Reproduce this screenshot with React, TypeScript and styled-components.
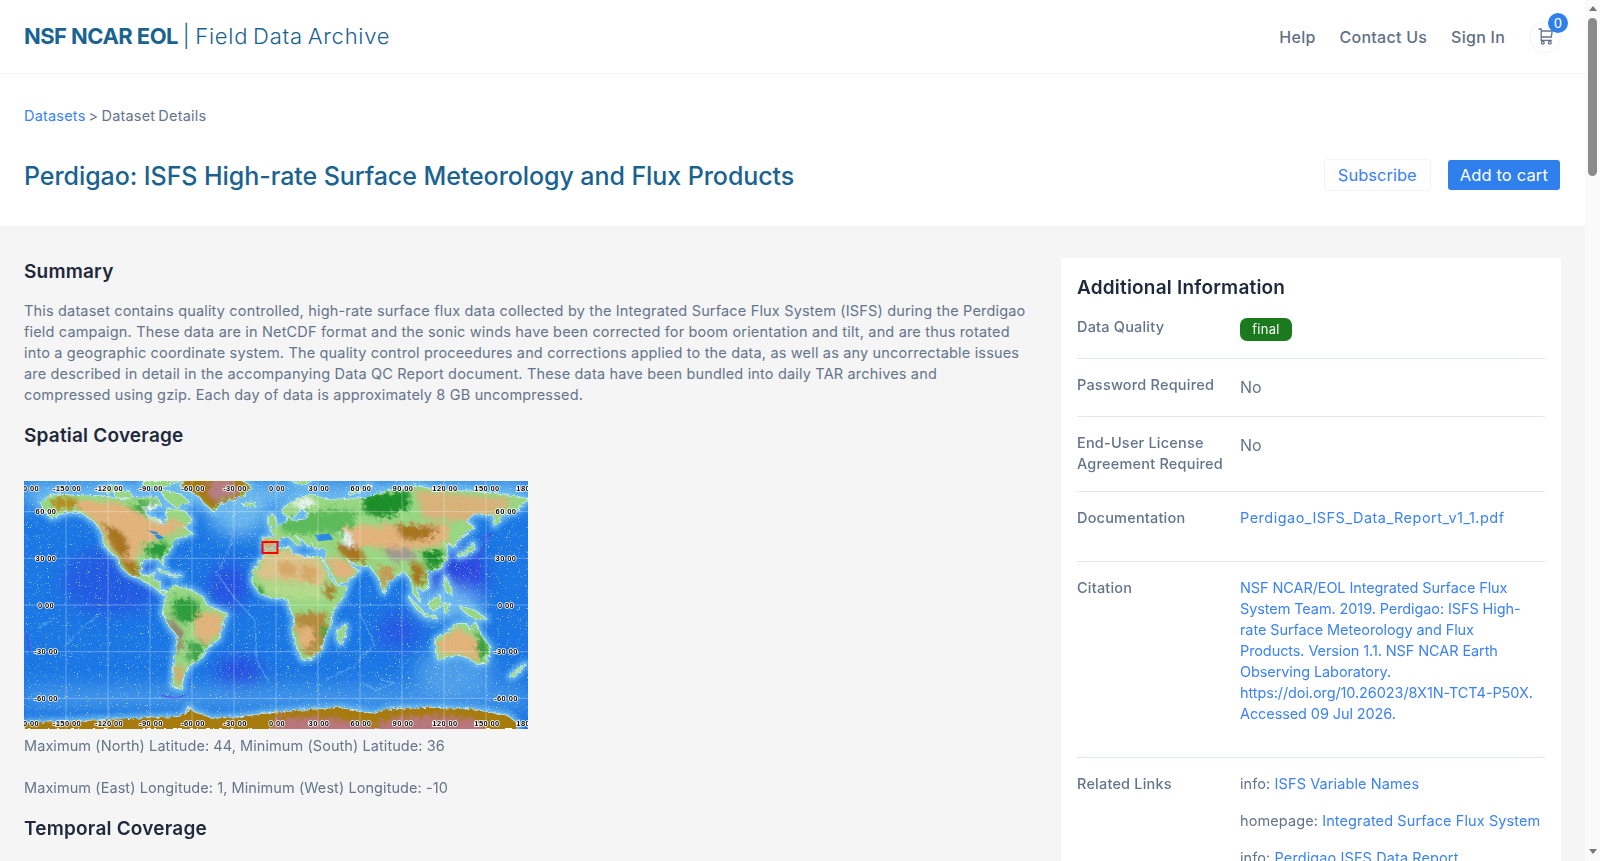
import React from 'react';
import styled, { createGlobalStyle } from 'styled-components';

const GlobalStyle = createGlobalStyle`
  body {
    margin: 0;
    background: #ffffff;
    font-family: Inter, 'Open Sans', sans-serif;
    color: #64748b;
  }
  a {
    color: #3b82f6;
    text-decoration: none;
  }
`;

const Shell = styled.div`
  height: 100vh;
  display: flex;
  overflow: hidden;
`;

const Scroller = styled.div`
  flex: 1;
  min-width: 0;
  overflow-y: auto;
  scrollbar-width: none;
`;

const ScrollTrack = styled.div`
  width: 15px;
  flex: none;
  background: #fafafa;
  display: flex;
  flex-direction: column;
  align-items: center;
`;

const ScrollArrow = styled.div<{ $down?: boolean }>`
  flex: none;
  width: 0;
  height: 0;
  margin: ${(p) => (p.$down ? 'auto 0 7px' : '6px 0 7px')};
  border-left: 4.5px solid transparent;
  border-right: 4.5px solid transparent;
  border-top: ${(p) => (p.$down ? '5px solid #777777' : 'none')};
  border-bottom: ${(p) => (p.$down ? 'none' : '5px solid #777777')};
`;

const ScrollThumb = styled.div`
  flex: none;
  width: 9px;
  height: 158px;
  border-radius: 5px;
  background: #8a8a8a;
`;

const Page = styled.div`
  min-height: 4507px;
  display: flex;
  flex-direction: column;
`;

const Header = styled.header`
  height: 73px;
  padding: 0 24px;
  display: flex;
  align-items: center;
  justify-content: space-between;
  border-bottom: 1px solid #f1f3f6;
`;

const Brand = styled.div`
  margin-top: -2px;
  font-size: 22px;
  font-weight: 300;
  color: #1a6390;
  letter-spacing: 0.78px;
  word-spacing: -2.2px;
  b {
    font-weight: 700;
    letter-spacing: -0.55px;
    word-spacing: 0;
  }
`;

const Nav = styled.nav`
  display: flex;
  align-items: center;
  gap: 24px;
`;

const NavLink = styled.a`
  font-size: 16px;
  font-weight: 500;
  letter-spacing: 0.25px;
  && {
    color: #5f6f87;
  }
`;

const CartButton = styled.button`
  position: relative;
  width: 32px;
  height: 32px;
  padding: 0;
  display: flex;
  align-items: center;
  justify-content: center;
  background: #ffffff;
  border: 1px solid #f1f5f9;
  border-radius: 50%;
  color: #64748b;
`;

const CartBadge = styled.span`
  position: absolute;
  top: -9px;
  right: -8px;
  width: 20px;
  height: 20px;
  border-radius: 50%;
  background: #2f80ed;
  color: #ffffff;
  font-size: 14px;
  line-height: 20px;
  text-align: center;
`;

const TitleSection = styled.section`
  padding: 31px 24px 32px;
`;

const Breadcrumb = styled.div`
  font-size: 14.5px;
  line-height: 21px;
  letter-spacing: 0.2px;
  word-spacing: -1.2px;
`;

const TitleRow = styled.div`
  margin-top: 32px;
  height: 36px;
  display: flex;
  align-items: center;
  justify-content: space-between;
`;

const PageTitle = styled.h1`
  margin: 0;
  font-size: 25px;
  font-weight: 500;
  letter-spacing: -0.07px;
  color: #1a6390;
`;

const Actions = styled.div`
  display: flex;
  align-items: center;
  gap: 17px;
  margin: 0 1px 2px 0;
`;

const ActionButton = styled.button<{ $primary?: boolean }>`
  height: ${(p) => (p.$primary ? '30px' : '32px')};
  padding: 0 ${(p) => (p.$primary ? '12px' : '13px')};
  font-family: inherit;
  font-size: 16.5px;
  letter-spacing: ${(p) => (p.$primary ? '0.15px' : '0')};
  border-radius: 3px;
  border: ${(p) => (p.$primary ? 'none' : '1px solid #f1f3f8')};
  background: ${(p) => (p.$primary ? '#2f80ed' : '#ffffff')};
  color: ${(p) => (p.$primary ? '#ffffff' : '#3b82f6')};
`;

const Main = styled.main`
  flex: 1;
  background: #f5f5f5;
  padding: 32px 24px;
  display: grid;
  grid-template-columns: 1fr 500px;
  gap: 32px;
  align-items: stretch;
`;

const Column = styled.div`
  min-width: 0;
`;

const SectionHeading = styled.h2`
  margin: 17px 0 15px;
  font-size: 19px;
  line-height: 27px;
  font-weight: 600;
  letter-spacing: 0.2px;
  color: #1e293b;
  &:first-child {
    margin-top: 0;
  }
`;

const BodyText = styled.p`
  margin: 0;
  font-size: 14.5px;
  line-height: 21px;
  letter-spacing: 0.17px;
`;

const MapFrame = styled.div`
  width: 504px;
  height: 248px;
  margin: 32px 0 6px;
`;

const Coordinate = styled.p`
  margin: 0 0 21px;
  font-size: 14.5px;
  line-height: 21px;
  letter-spacing: 0.07px;
  &:last-of-type {
    margin-bottom: 0;
  }
`;

const Card = styled.aside`
  background: #ffffff;
  padding: 16px;
`;

const CardHeading = styled.h2`
  margin: 0;
  font-size: 19px;
  line-height: 27px;
  font-weight: 600;
  letter-spacing: 0.2px;
  color: #1e293b;
`;

const Row = styled.div`
  display: grid;
  grid-template-columns: 163px 1fr;
  padding: 15px 0 17px;
  border-top: 1px solid #e2e8f0;
  &:first-of-type {
    border-top: none;
  }
`;

const Label = styled.div`
  font-size: 14.5px;
  line-height: 21px;
  font-weight: 500;
  letter-spacing: 0.2px;
  color: #64748b;
`;

const Value = styled.div`
  margin-top: 1px;
  font-size: 16px;
  line-height: 24px;
`;

const ValueText = styled.p<{ $spacing?: string }>`
  margin: 0 0 16px;
  font-size: 14.5px;
  line-height: 21px;
  letter-spacing: ${(p) => p.$spacing ?? '0.1px'};
  &:last-child {
    margin-bottom: 0;
  }
`;

const Paragraphs = styled.div`
  padding-bottom: 16px;
`;

const QualityBadge = styled.span`
  display: block;
  width: 52px;
  height: 23px;
  margin-top: 1px;
  border-radius: 7px;
  background: #1b7a1e;
  color: #ffffff;
  font-size: 13px;
  line-height: 23px;
  letter-spacing: 0.3px;
  text-align: center;
`;

const CartIcon = () => (
  <svg width="15" height="17" viewBox="0 0 15 17" fill="none" stroke="currentColor" strokeWidth="1.3">
    <path d="M0.5 1h2.7v11.4h10.6" />
    <path d="M3.2 3h11l-0.9 6H3.2" />
    <circle cx="4.8" cy="14.8" r="1.4" />
    <circle cx="11.8" cy="14.8" r="1.4" />
  </svg>
);

/* lon/lat rings, projected to the 504x248 plate below */
type Ring = number[][];
const project = (r: Ring) =>
  r.map(([lon, lat]) => `${(252 + lon * 1.4).toFixed(1)},${(124 - lat * 1.556).toFixed(1)}`).join(' ');

const coast: Ring[] = [
  [[-168,66],[-162,70],[-156,71],[-140,70],[-125,70],[-110,68],[-95,69],[-85,69],[-82,64],[-93,60],[-92,57],[-83,55],[-80,51],[-78,56],[-78,62],[-70,61],[-65,60],[-60,54],[-66,50],[-60,46],[-70,43],[-74,40],[-76,35],[-81,31],[-80,25],[-83,29],[-90,30],[-97,27],[-97,20],[-91,18],[-87,21],[-88,16],[-83,15],[-83,9],[-78,9],[-81,7],[-86,11],[-95,16],[-105,20],[-110,24],[-113,31],[-117,33],[-123,39],[-124,47],[-130,54],[-140,60],[-150,60],[-160,56],[-165,60]],
  [[-44,60],[-52,66],[-55,70],[-68,76],[-66,82],[-30,84],[-18,76],[-24,70],[-40,65]],
  [[-78,8],[-72,12],[-62,10],[-52,5],[-50,0],[-35,-6],[-39,-15],[-41,-22],[-48,-26],[-54,-34],[-62,-39],[-66,-46],[-68,-54],[-74,-52],[-73,-40],[-70,-20],[-76,-14],[-81,-5],[-79,2]],
  [[-17,15],[-16,22],[-10,30],[-6,35],[10,37],[11,33],[20,31],[32,31],[35,25],[38,18],[43,12],[51,12],[47,4],[40,-4],[39,-12],[35,-20],[33,-27],[26,-34],[19,-35],[15,-27],[12,-17],[13,-8],[9,0],[9,4],[-4,5],[-12,8]],
  [[-9,37],[-9,43],[-1,44],[-4,48],[3,51],[9,54],[8,57],[12,54],[20,55],[24,59],[20,61],[22,65],[17,61],[12,56],[5,59],[5,62],[14,68],[25,71],[40,67],[44,68],[68,69],[73,72],[100,77],[113,74],[140,73],[170,70],[180,68],[170,60],[163,58],[156,51],[156,58],[142,59],[135,54],[141,50],[130,42],[127,37],[125,39],[121,39],[122,31],[118,24],[108,21],[109,12],[105,9],[100,13],[103,2],[98,8],[97,16],[91,22],[80,15],[77,8],[73,18],[67,25],[57,26],[50,30],[55,24],[59,22],[52,16],[44,13],[39,21],[35,28],[36,36],[27,37],[26,40],[23,38],[19,42],[13,45],[18,40],[16,38],[9,44],[3,43],[0,39],[-5,36]],
  [[114,-22],[122,-18],[130,-12],[136,-12],[139,-17],[142,-11],[146,-19],[153,-27],[150,-37],[144,-38],[138,-34],[130,-32],[116,-35],[114,-28]],
  [[44,-16],[50,-13],[49,-20],[46,-25],[44,-22]],
  [[109,1],[117,6],[118,1],[114,-4],[110,-2]],
  [[95,5],[104,-3],[106,-6],[101,-3]],
  [[106,-6],[114,-7],[114,-8],[106,-7]],
  [[131,-1],[141,-3],[150,-9],[143,-9],[137,-6]],
  [[120,1],[124,1],[122,-5],[120,-4]],
  [[121,18],[124,12],[126,7],[122,8],[120,14]],
  [[130,32],[136,35],[141,40],[142,36],[136,33],[131,31]],
  [[-5,50],[1,52],[-2,58],[-6,57]],
  [[-24,65],[-14,66],[-15,64],[-22,63]],
  [[173,-41],[178,-38],[170,-46],[167,-46]],
  [[-84,23],[-75,20],[-78,20],[-84,22]],
  [[-74,19],[-68,19],[-70,18],[-74,18]],
  [[-115,73],[-105,73],[-102,69],[-115,69]],
  [[-82,74],[-68,71],[-62,66],[-72,63],[-80,69]],
  [[-95,80],[-70,84],[-65,81],[-80,76],[-95,76]],
  [[-125,75],[-115,77],[-110,75],[-120,72]],
  [[12,79],[25,80],[20,77]],
  [[52,71],[60,75],[68,77],[57,72]],
];

const antarctica: Ring = [[-62,-66],[-58,-69],[-45,-73],[-25,-72],[-10,-70],[15,-68],[45,-66],[58,-68],[70,-70],[80,-67],[110,-66],[140,-67],[165,-71],[172,-76],[172,-90],[-180,-90],[-180,-76],[-150,-75],[-100,-73],[-70,-72],[-64,-70]];

type Patch = { color: string; ring: Ring };
const elevation: Patch[] = [
  // north america
  { color: '#e3b47c', ring: [[-150,68],[-115,66],[-100,60],[-85,52],[-72,56],[-63,50],[-75,46],[-85,43],[-97,37],[-100,29],[-108,27],[-118,36],[-128,53]] },
  { color: '#a8761e', ring: [[-124,52],[-110,47],[-104,36],[-108,30],[-114,33],[-120,43]] },
  { color: '#a8761e', ring: [[-112,30],[-100,28],[-97,20],[-102,18],[-108,24]] },
  { color: '#2a9c3a', ring: [[-94,37],[-80,41],[-76,37],[-82,31],[-93,31]] },
  { color: '#46aa48', ring: [[-95,68],[-85,66],[-95,58],[-105,62]] },
  { color: '#b49020', ring: [[-160,70],[-142,69],[-142,62],[-158,60]] },
  // greenland
  { color: '#a8780f', ring: [[-44,60],[-52,66],[-55,70],[-68,76],[-66,82],[-30,84],[-18,76],[-24,70],[-40,65]] },
  { color: '#b77f86', ring: [[-42,66],[-49,72],[-45,80],[-30,80],[-28,72]] },
  // south america
  { color: '#e3b47c', ring: [[-50,-4],[-37,-7],[-40,-18],[-50,-25],[-58,-20],[-58,-8]] },
  { color: '#2f9e3e', ring: [[-75,3],[-62,5],[-54,1],[-55,-8],[-64,-12],[-72,-9]] },
  { color: '#3da44b', ring: [[-62,-24],[-50,-24],[-55,-35],[-64,-36]] },
  { color: '#d9ab6e', ring: [[-72,-38],[-66,-40],[-67,-52],[-72,-50]] },
  { color: '#93806c', ring: [[-78,-6],[-73,-10],[-66,-18],[-68,-30],[-71,-33],[-71,-20],[-76,-13]] },
  // africa
  { color: '#dcc48a', ring: [[-14,20],[-8,33],[10,35],[30,30],[36,20],[34,12],[10,15],[-12,16]] },
  { color: '#d8a868', ring: [[2,28],[14,26],[14,18],[2,19]] },
  { color: '#d8a868', ring: [[18,26],[30,24],[28,15],[18,15]] },
  { color: '#b6dc8c', ring: [[-14,14],[35,12],[32,3],[10,5],[-6,8]] },
  { color: '#2f9e3e', ring: [[-16,13],[-9,12],[-8,6],[-13,8]] },
  { color: '#a97c24', ring: [[36,15],[43,11],[40,4],[35,5]] },
  { color: '#b58c3c', ring: [[14,-6],[36,-4],[36,-20],[30,-31],[20,-32],[14,-18]] },
  { color: '#e3b47c', ring: [[15,-14],[27,-14],[26,-26],[17,-28]] },
  { color: '#2f9e3e', ring: [[34,-14],[39,-14],[35,-24],[31,-24]] },
  // eurasia
  { color: '#5dbb5a', ring: [[0,55],[40,62],[60,60],[50,46],[20,46],[6,46]] },
  { color: '#f2f7fa', ring: [[8,64],[22,69],[30,66],[20,62]] },
  { color: '#1e8f2c', ring: [[62,70],[95,74],[95,62],[75,56],[62,60]] },
  { color: '#d9b37a', ring: [[100,74],[170,68],[160,60],[135,54],[105,56]] },
  { color: '#e3b47c', ring: [[48,50],[85,52],[125,52],[122,40],[102,36],[75,37],[55,37]] },
  { color: '#a8761e', ring: [[85,52],[118,50],[108,42],[90,42]] },
  { color: '#a8761e', ring: [[42,40],[60,37],[65,28],[56,27],[47,32]] },
  { color: '#e3b47c', ring: [[36,30],[47,30],[57,23],[51,17],[45,14]] },
  { color: '#a09a90', ring: [[78,37],[96,36],[102,30],[86,28],[78,32]] },
  { color: '#c79a52', ring: [[72,25],[87,24],[80,13],[77,10]] },
  { color: '#1e8f2c', ring: [[104,34],[119,36],[120,28],[108,23]] },
  { color: '#a8761e', ring: [[96,29],[106,24],[104,12],[98,14]] },
  { color: '#d9b37a', ring: [[-9,43],[2,43],[0,37],[-9,37]] },
  // australia
  { color: '#e3b47c', ring: [[116,-24],[130,-15],[140,-20],[147,-28],[142,-35],[128,-31],[117,-33]] },
  { color: '#2f9e3e', ring: [[143,-14],[147,-20],[152,-28],[149,-36],[145,-34]] },
  // antarctica
  { color: '#b9767c', ring: [[0,-73],[30,-72],[60,-75],[70,-79],[80,-73],[110,-71],[140,-73],[150,-80],[150,-90],[-5,-90]] },
];

const snow: Ring[] = [
  [[-94,64],[-82,64],[-80,52],[-90,56]],
  [[50,46],[54,46],[54,38],[50,37],[47,42]],
];
const lakes: Ring[] = [
  [[-92,48],[-85,47],[-84,45],[-88,46]],
  [[-87,45],[-83,45],[-80,43],[-84,42]],
  [[28,45],[38,46],[41,42],[30,41]],
];

const lons = [-180, -150, -120, -90, -60, -30, 0, 30, 60, 90, 120, 150, 180];
const lats = [60, 30, 0, -30, -60];
const deg = (v: number) => `${v} 00`;

const WorldMap = () => (
  <svg width="504" height="248" viewBox="0 0 504 248" style={{ display: 'block' }}>
    <defs>
      <clipPath id="plate"><rect width="504" height="248" /></clipPath>
      <clipPath id="land">
        {coast.map((r, i) => (
          <polygon key={i} points={project(r)} />
        ))}
        <polygon points={project(antarctica)} />
      </clipPath>
      <filter id="soft" x="-10%" y="-10%" width="120%" height="120%"><feGaussianBlur stdDeviation="2.6" /></filter>
      <filter id="softer" x="-20%" y="-20%" width="140%" height="140%"><feGaussianBlur stdDeviation="9" /></filter>
      <filter id="rough" x="-5%" y="-5%" width="110%" height="110%">
        <feTurbulence type="fractalNoise" baseFrequency="0.28" numOctaves="3" seed="7" result="n" />
        <feDisplacementMap in="SourceGraphic" in2="n" scale="5" />
      </filter>
      <filter id="patchy" x="-10%" y="-10%" width="120%" height="120%">
        <feTurbulence type="fractalNoise" baseFrequency="0.2" numOctaves="4" seed="11" result="n" />
        <feGaussianBlur in="SourceGraphic" stdDeviation="2.2" result="b" />
        <feDisplacementMap in="b" in2="n" scale="12" />
      </filter>
      <filter id="speck" x="0" y="0" width="100%" height="100%">
        <feTurbulence type="fractalNoise" baseFrequency="0.9" numOctaves="2" seed="4" />
        <feColorMatrix values="0 0 0 0 0.7  0 0 0 0 0.88  0 0 0 0 1  0 0 0 6 -4" />
      </filter>
      <filter id="grain" x="0" y="0" width="100%" height="100%">
        <feTurbulence type="fractalNoise" baseFrequency="0.85" numOctaves="1" seed="9" />
        <feColorMatrix values="0 0 0 0 0.15  0 0 0 0 0.15  0 0 0 0 0.1  0 0 0 2 -1" />
      </filter>
    </defs>
    <g clipPath="url(#plate)">
      <rect width="504" height="248" fill="#1b78e6" />
      <g filter="url(#softer)" fill="#2b46e2">
        <ellipse cx="88" cy="100" rx="50" ry="34" opacity="0.55" />
        <ellipse cx="430" cy="95" rx="32" ry="34" />
        <ellipse cx="205" cy="105" rx="20" ry="22" opacity="0.8" />
        <ellipse cx="215" cy="190" rx="24" ry="12" />
        <ellipse cx="375" cy="150" rx="22" ry="18" opacity="0.6" />
      </g>
      <g filter="url(#softer)" fill="#6cb8f0">
        <rect x="0" y="205" width="504" height="22" opacity="0.5" />
        <rect x="0" y="0" width="504" height="26" />
        <ellipse cx="215" cy="35" rx="30" ry="20" />
        <ellipse cx="430" cy="190" rx="40" ry="22" opacity="0.6" />
        <ellipse cx="425" cy="122" rx="34" ry="18" />
      </g>
      <g filter="url(#soft)" fill="none" strokeLinejoin="round">
        {[...coast, antarctica].map((r, i) => (
          <polygon key={i} points={project(r)} stroke="#6cbcf0" strokeWidth="8" />
        ))}
      </g>
      <rect width="504" height="248" filter="url(#speck)" opacity="0.8" />
      <g fill="none" stroke="#9ed6f2" strokeWidth="1.4" opacity="0.35" filter="url(#rough)">
        <polyline points={project([[-30,60],[-32,40],[-42,20],[-30,5],[-15,-10],[-14,-35],[-5,-50]])} />
        <polyline points={project([[60,-5],[70,-25],[55,-40],[35,-48]])} />
        <polyline points={project([[75,-48],[85,-50],[72,-55],[62,-50]])} />
        <polyline points={project([[-150,-25],[-135,-12],[-125,-5]])} />
        <polyline points={project([[-170,-15],[-158,-8]])} />
      </g>
      <g fill="none" stroke="#6a36e0" strokeWidth="0.9">
        <polyline points={project([[146,42],[154,46],[143,30],[144,15]])} />
        <polyline points={project([[-178,-18],[-176,-30]])} />
        <polyline points={project([[-82,-58],[-72,-60],[-65,-58]])} />
      </g>
      <g filter="url(#rough)">
        <g fill="#d7eff8" stroke="#d7eff8" strokeWidth="1.6" strokeLinejoin="round">
          {coast.map((r, i) => (
            <polygon key={i} points={project(r)} />
          ))}
          <polygon points={project(antarctica)} fill="#ffffff" />
        </g>
        <g clipPath="url(#land)">
          <rect width="504" height="218" fill="#98d884" />
          <rect y="218" width="504" height="30" fill="#a77b10" />
          <g filter="url(#patchy)">
            {elevation.map((p, i) => (
              <polygon key={i} points={project(p.ring)} fill={p.color} />
            ))}
            {snow.map((r, i) => (
              <polygon key={i} points={project(r)} fill="#e6f4fa" />
            ))}
          </g>
        </g>
      </g>
      {lakes.map((r, i) => (
        <polygon key={i} points={project(r)} fill="#2a8ae6" />
      ))}
      <rect width="504" height="248" filter="url(#grain)" opacity="0.15" />
      <g stroke="#ffffff" strokeWidth="1" opacity="0.3">
        {lons.slice(1, -1).map((l) => (
          <line key={l} x1={252 + l * 1.4} x2={252 + l * 1.4} y1="0" y2="248" />
        ))}
        {lats.map((l) => (
          <line key={l} y1={124 - l * 1.556} y2={124 - l * 1.556} x1="0" x2="504" />
        ))}
      </g>
      <rect x="238.5" y="61" width="15" height="11" fill="#c8a080" opacity="0.35" />
      <rect x="238.5" y="61" width="15" height="11" fill="none" stroke="#ff0000" strokeWidth="2" />
      <g
        fontFamily="'Liberation Sans', sans-serif"
        fontSize="7.5"
        fontWeight="700"
        letterSpacing="0.4"
        fill="#000000"
        stroke="#ffffff"
        strokeWidth="1.6"
        paintOrder="stroke"
        textAnchor="middle"
      >
        {lons.map((l) => (
          <text key={`t${l}`} x={253 + l * 1.4} y="9.5">{deg(l)}</text>
        ))}
        {lons.map((l) => (
          <text key={`b${l}`} x={253 + l * 1.4} y="245">{deg(l)}</text>
        ))}
        {lats.map((l) => (
          <text key={`l${l}`} x="22" y={126.5 - l * 1.556}>{deg(l)}</text>
        ))}
        {lats.map((l) => (
          <text key={`r${l}`} x="482" y={126.5 - l * 1.556}>{deg(l)}</text>
        ))}
      </g>
    </g>
  </svg>
);

export default function App() {
  return (
    <Shell>
      <GlobalStyle />
      <Scroller>
        <Page>
          <Header>
            <Brand>
              <b>NSF NCAR EOL</b> | Field Data Archive
            </Brand>
            <Nav>
              <NavLink href="#">Help</NavLink>
              <NavLink href="#">Contact Us</NavLink>
              <NavLink href="#">Sign In</NavLink>
              <CartButton aria-label="Cart">
                <CartIcon />
                <CartBadge>0</CartBadge>
              </CartButton>
            </Nav>
          </Header>
          <TitleSection>
            <Breadcrumb>
              <a href="#">Datasets</a> &gt; Dataset Details
            </Breadcrumb>
            <TitleRow>
              <PageTitle>Perdigao: ISFS High-rate Surface Meteorology and Flux Products</PageTitle>
              <Actions>
                <ActionButton>Subscribe</ActionButton>
                <ActionButton $primary>Add to cart</ActionButton>
              </Actions>
            </TitleRow>
          </TitleSection>
          <Main>
            <Column>
              <SectionHeading>Summary</SectionHeading>
              <BodyText>
                This dataset contains quality controlled, high-rate surface flux data collected by the Integrated Surface Flux System (ISFS) during the Perdigao<br />
                field campaign. These data are in NetCDF format and the sonic winds have been corrected for boom orientation and tilt, and are thus rotated<br />
                into a geographic coordinate system. The quality control proceedures and corrections applied to the data, as well as any uncorrectable issues<br />
                are described in detail in the accompanying Data QC Report document. These data have been bundled into daily TAR archives and<br />
                compressed using gzip. Each day of data is approximately 8 GB uncompressed.
              </BodyText>
              <SectionHeading>Spatial Coverage</SectionHeading>
              <MapFrame>
                <WorldMap />
              </MapFrame>
              <Coordinate>Maximum (North) Latitude: 44, Minimum (South) Latitude: 36</Coordinate>
              <Coordinate>Maximum (East) Longitude: 1, Minimum (West) Longitude: -10</Coordinate>
              <SectionHeading>Temporal Coverage</SectionHeading>
            </Column>
            <Card>
              <CardHeading>Additional Information</CardHeading>
              <Row>
                <Label>Data Quality</Label>
                <Value><QualityBadge>final</QualityBadge></Value>
              </Row>
              <Row>
                <Label>Password Required</Label>
                <Value>No</Value>
              </Row>
              <Row>
                <Label>End-User License<br />Agreement Required</Label>
                <Value>No</Value>
              </Row>
              <Row>
                <Label>Documentation</Label>
                <Paragraphs>
                  <ValueText $spacing="0.48px"><a href="#">Perdigao_ISFS_Data_Report_v1_1.pdf</a></ValueText>
                </Paragraphs>
              </Row>
              <Row>
                <Label>Citation</Label>
                <Paragraphs>
                  <ValueText $spacing="-0.1px">
                    <a href="#">
                      NSF NCAR/EOL Integrated Surface Flux<br />
                      System Team. 2019. Perdigao: ISFS High-<br />
                      rate Surface Meteorology and Flux<br />
                      Products. Version 1.1. NSF NCAR Earth<br />
                      Observing Laboratory.<br />
                      https://doi.org/10.26023/8X1N-TCT4-P50X.<br />
                      Accessed 09 Jul 2026.
                    </a>
                  </ValueText>
                </Paragraphs>
              </Row>
              <Row>
                <Label>Related Links</Label>
                <div>
                  <ValueText>info: <a href="#">ISFS Variable Names</a></ValueText>
                  <ValueText>homepage: <a href="#">Integrated Surface Flux System</a></ValueText>
                  <ValueText>info: <a href="#">Perdigao ISFS Data Report</a></ValueText>
                </div>
              </Row>
            </Card>
          </Main>
        </Page>
      </Scroller>
      <ScrollTrack>
        <ScrollArrow />
        <ScrollThumb />
        <ScrollArrow $down />
      </ScrollTrack>
    </Shell>
  );
}
